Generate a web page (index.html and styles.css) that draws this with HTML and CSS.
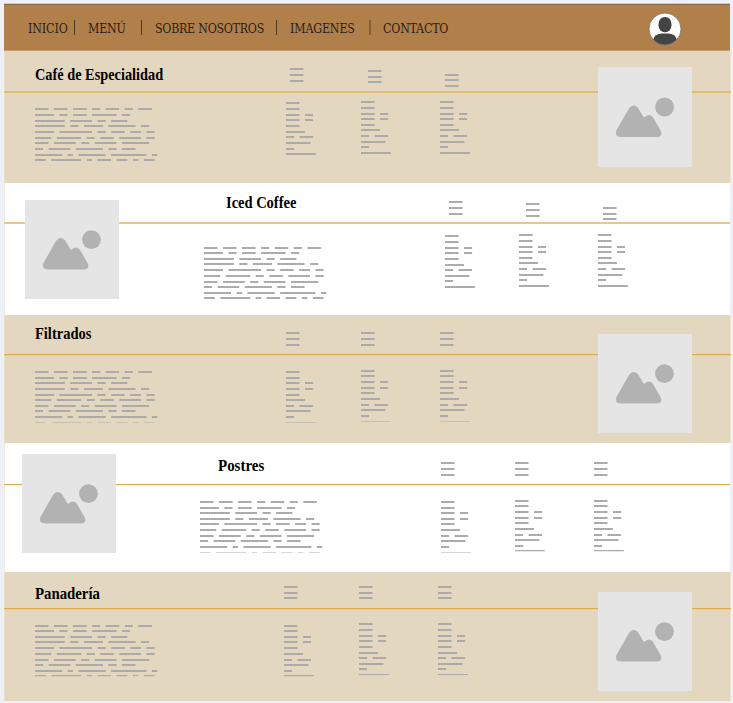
FILE: index.html
```html
<!DOCTYPE html>
<html lang="es">
<head>
<meta charset="utf-8">
<title>Menú</title>
<link rel="stylesheet" href="styles.css">
</head>
<body>
<svg class="defs" aria-hidden="true">
  <symbol id="picture" viewBox="0 0 93.5 99">
    <path d="M18.5 62.5 L30 42.2 Q35.5 34 41 42.2 L45 49 Q46 50.4 47.2 49 Q51 45.600 54.500 49.500 L62.300 63 Q65 69.500 58.500 69.500 L23 69.500 Q15.500 69.300 18.500 62.500Z"/>
    <circle cx="66.200" cy="39.600" r="9.400"/>
  </symbol>
</svg>
<div class="page">
  <header class="nav">
    <a class="n1">INICIO</a><i></i>
    <a class="n2">MENÚ</a><i></i>
    <a class="n3">SOBRE NOSOTROS</a><i></i>
    <a class="n4">IMAGENES</a><i class="soft"></i>
    <a class="n5">CONTACTO</a>
    <svg class="avatar" viewBox="0 0 34 34">
      <defs><clipPath id="round"><circle cx="17" cy="17" r="16"/></clipPath></defs>
      <circle cx="17" cy="17" r="16" fill="#fff"/>
      <g clip-path="url(#round)" fill="#444">
        <rect x="10.500" y="5" width="13" height="15.300" rx="6.200" ry="7"/>
        <path d="M5 34V28Q6.500 21.600 14 21.500H20Q27.500 21.600 29 28V34Z"/>
      </g>
      <circle cx="17" cy="17" r="16" fill="none" stroke="#75706b" stroke-width=".8"/>
    </svg>
  </header>

  <section class="row right cafe">
    <div class="head">
      <h2>Café de Especialidad</h2>
      <div class="lines" data-kind="head" data-steps="66"></div>
      <div class="lines" data-kind="head" data-steps="65"></div>
      <div class="lines" data-kind="head" data-steps="56"></div>
    </div>
    <div class="body">
      <div class="lines" data-kind="para" data-steps="665665665"></div>
      <div class="lines" data-kind="list" data-steps="665665665"></div>
      <div class="lines" data-kind="list" data-steps="665656656"></div>
      <div class="lines" data-kind="list" data-steps="665656656"></div>
    </div>
    <svg class="pic"><use href="#picture"/></svg>
  </section>

  <section class="row left iced">
    <div class="head">
      <h2>Iced Coffee</h2>
      <div class="lines" data-kind="head" data-steps="66"></div>
      <div class="lines" data-kind="head" data-steps="66"></div>
      <div class="lines" data-kind="head" data-steps="65"></div>
    </div>
    <div class="body">
      <div class="lines" data-kind="para" data-steps="565666565"></div>
      <div class="lines" data-kind="list" data-steps="665665656"></div>
      <div class="lines" data-kind="list" data-steps="665656656"></div>
      <div class="lines" data-kind="list" data-steps="665656656"></div>
    </div>
    <svg class="pic"><use href="#picture"/></svg>
  </section>

  <section class="row right filtrados">
    <div class="head">
      <h2>Filtrados</h2>
      <div class="lines" data-kind="head" data-steps="66"></div>
      <div class="lines" data-kind="head" data-steps="66"></div>
      <div class="lines" data-kind="head" data-steps="66"></div>
    </div>
    <div class="body">
      <div class="lines" data-kind="para" data-steps="656656566" data-tail=".6"></div>
      <div class="lines" data-kind="list" data-steps="656656566" data-tail=".6"></div>
      <div class="lines" data-kind="list" data-steps="566566566" data-tail=".4"></div>
      <div class="lines" data-kind="list" data-steps="566566566" data-tail=".4"></div>
    </div>
    <svg class="pic"><use href="#picture"/></svg>
  </section>

  <section class="row left postres">
    <div class="head">
      <h2>Postres</h2>
      <div class="lines" data-kind="head" data-steps="66"></div>
      <div class="lines" data-kind="head" data-steps="66"></div>
      <div class="lines" data-kind="head" data-steps="66"></div>
    </div>
    <div class="body">
      <div class="lines" data-kind="para" data-steps="656566566" data-tail=".6"></div>
      <div class="lines" data-kind="list" data-steps="656566566" data-tail=".5"></div>
      <div class="lines" data-kind="list" data-steps="566566565" data-tail="1.3"></div>
      <div class="lines" data-kind="list" data-steps="566566565" data-tail="1.3"></div>
    </div>
    <svg class="pic"><use href="#picture"/></svg>
  </section>

  <section class="row right panaderia">
    <div class="head">
      <h2>Panadería</h2>
      <div class="lines" data-kind="head" data-steps="65"></div>
      <div class="lines" data-kind="head" data-steps="65"></div>
      <div class="lines" data-kind="head" data-steps="65"></div>
    </div>
    <div class="body">
      <div class="lines" data-kind="para" data-steps="565666565" data-tail="1.2"></div>
      <div class="lines" data-kind="list" data-steps="565666565" data-tail="1.2"></div>
      <div class="lines" data-kind="list" data-steps="665665656" data-tail="1"></div>
      <div class="lines" data-kind="list" data-steps="665665656" data-tail="1"></div>
    </div>
    <svg class="pic"><use href="#picture"/></svg>
  </section>
</div>
<script src="lines.js"></script>
</body>
</html>
```
FILE: styles.css
```css
* { box-sizing: border-box; }
body {
  margin: 0;
  height: 703px;
  overflow: hidden;
  background: #edf0f6;
  font-family: "Liberation Serif", serif;
  color: #000;
}
.defs { display: none; }
.page { padding: 3px 2px 2px 4px; }

.nav {
  display: flex;
  align-items: flex-start;
  width: 726px;
  height: 48px;
  border-top: 1px solid #cdcdd1;
  background: #b07f4a;
  box-shadow: inset 0 1px #8c6a47, inset 0 -1px #c39c70;
  padding-left: 24px;
}
.nav a {
  flex: none;
  padding-top: 16px;
  height: 34px;
  font: 12.3px/18px "DejaVu Serif Condensed", "DejaVu Serif", serif;
  font-stretch: condensed;
  color: #2b2017;
  white-space: nowrap;
}
.nav i { flex: none; width: 1px; height: 15px; margin-top: 16px; background: #4d3822; }
.nav i.soft { width: 2px; background: #80603a; }
.n1 { width: 46px; letter-spacing: -.1px; }
.n2 { width: 53px; margin-left: 13px; letter-spacing: -.2px; }
.n3 { width: 121px; margin-left: 13px; letter-spacing: -.25px; }
.n4 { width: 79px; margin-left: 13px; letter-spacing: -.15px; }
.n5 { width: 66px; margin-left: 12px; letter-spacing: -.2px; }
.avatar { flex: none; width: 34px; height: 34px; margin: 8px 0 0 199px; }

.row {
  display: grid;
  grid-template-rows: var(--head) 1fr;
  width: 727px;
}
.right { grid-template-columns: 594px 94px 1fr; background: #e3d7bf; box-shadow: inset 1px 0 #eadfca, inset -1px 0 #ece3d2; }
.left { grid-template-columns: 18px 94px 1fr; background: #fff; width: 726px; box-shadow: inset 1px 0 #f3ebe3; }
.head, .body {
  grid-column: 1 / -1;
  display: grid;
  align-items: start;
}
.head { grid-row: 1; border-bottom: 1px solid #dcac50; box-shadow: 0 1px #e0cfa9; }
.body { grid-row: 2; }
.right > .head, .right > .body { grid-template-columns: 251px 75px 79px 1fr; padding-left: 31px; }
.left > .head, .left > .body { grid-template-columns: 241px 74px 79px 1fr; padding-left: 200px; }
.left > .head { box-shadow: 0 1px #faf3e5; }

h2 {
  margin: var(--ty) 0 0 var(--tx, 0px);
  font-size: 16px;
  line-height: 20px;
  font-weight: bold;
  white-space: nowrap;
  transform: scaleX(var(--narrow));
  transform-origin: left;
}
.pic {
  display: block;
  grid-row: 1 / 3;
  grid-column: 2;
  width: 94px;
  height: var(--ph, 99px);
  margin-top: var(--py);
  background: #e5e5e5;
  fill: #b2b2b2;
}
.lines svg { display: block; fill: #a9a9a9; }

.head > :nth-child(2) { margin: var(--h1) 0 0 var(--x1, 0px); }
.head > :nth-child(3) { margin: var(--h2) 0 0 var(--x2, 0px); }
.head > :nth-child(4) { margin: var(--h3) 0 0 var(--x3, 0px); }
.body > :nth-child(1) { margin-top: var(--b0); }
.body > :nth-child(2) { margin-top: var(--b1); }
.body > :nth-child(3), .body > :nth-child(4) { margin-top: var(--b2); }

.cafe {
  height: 132px; --head: 42px; --ty: 14px; --py: 16px; --ph: 100px; --narrow: .895;
  --h1: 17px; --h2: 19px; --h3: 23px; --x1: 4.300px; --x2: 6.700px; --x3: 5px;
  --b0: 15px; --b1: 9px; --b2: 8px;
}
.cafe > .head { border-bottom: 2px solid #dfbd75; box-shadow: none; }
.iced {
  height: 132px; --head: 41px; --ty: 10px; --tx: 22px; --py: 17px; --ph: 99px; --narrow: .905;
  --h1: 18px; --h2: 20px; --h3: 24px; --x1: 4px; --x2: 7px; --x3: 5px;
  --b0: 23px; --b1: 11px; --b2: 10px;
}
.iced > .head { border-bottom: 2px solid #e3c88f; box-shadow: none; }
.iced > .pic { margin-left: 3px; }
.filtrados {
  height: 128px; --head: 40px; --ty: 9px; --py: 19px; --ph: 99px; --narrow: .905;
  --h1: 17px; --h2: 17px; --h3: 17px;
  --b0: 16px; --b1: 16px; --b2: 15px;
}
.postres {
  height: 129px; --head: 42px; --ty: 13px; --tx: 18px; --py: 11px; --ph: 99px; --narrow: .935;
  --h1: 19px; --h2: 19px; --h3: 19px;
  --b0: 16px; --b1: 16px; --b2: 15px;
}
.postres > .head, .postres > .body { padding-left: 196px; }
.panaderia {
  height: 129px; --head: 37px; --ty: 12px; --py: 20px; --ph: 99px; --narrow: .925;
  --h1: 14px; --h2: 14px; --h3: 14px;
  --b0: 16px; --b1: 16px; --b2: 14px;
}
.panaderia > .head, .panaderia > .body { grid-template-columns: 249px 74.700px 79.300px 1fr; }
```
FILE: lines.js
```js
// Placeholder copy: each number is the length of one blocked-out word.
const copy = {
  head: [[5], [5], [5]],
  list: [[5], [5], [5, 3], [5, 3], [5], [7], [3, 5], [9], [3], [11]],
  para: [
    [5, 5, 5, 3, 5, 3, 5], [7, 3, 5, 9, 3], [11, 8, 3, 6], [11, 3, 7, 10, 3],
    [7, 12, 3, 5, 4, 3], [6, 9, 3, 5, 8, 3], [5, 8, 3, 8, 10], [3, 8, 10, 3, 5],
    [10, 2, 10, 13, 2], [4, 11, 2, 5, 4, 2, 4]
  ]
};
const unit = 2.72;

document.querySelectorAll('.lines').forEach(el => {
  const rows = copy[el.dataset.kind];
  const steps = [...el.dataset.steps].map(Number);
  let y = 0, d = '';
  rows.forEach((words, r) => {
    const last = r === rows.length - 1;
    const h = last && el.dataset.tail ? Number(el.dataset.tail) : 2;
    let col = 0;
    words.forEach(n => {
      for (let i = 0; i < n; i++) {
        d += `M${((col + i) * unit).toFixed(2)} ${y}h2.62v${h}h-2.62z`;
      }
      col += n + 2;
    });
    if (!last) y += steps[r];
  });
  const w = el.dataset.kind === 'para' ? 124 : el.dataset.kind === 'list' ? 31 : 14;
  el.innerHTML = `<svg width="${w}" height="${y + 2}"><path d="${d}"/></svg>`;
});
```
